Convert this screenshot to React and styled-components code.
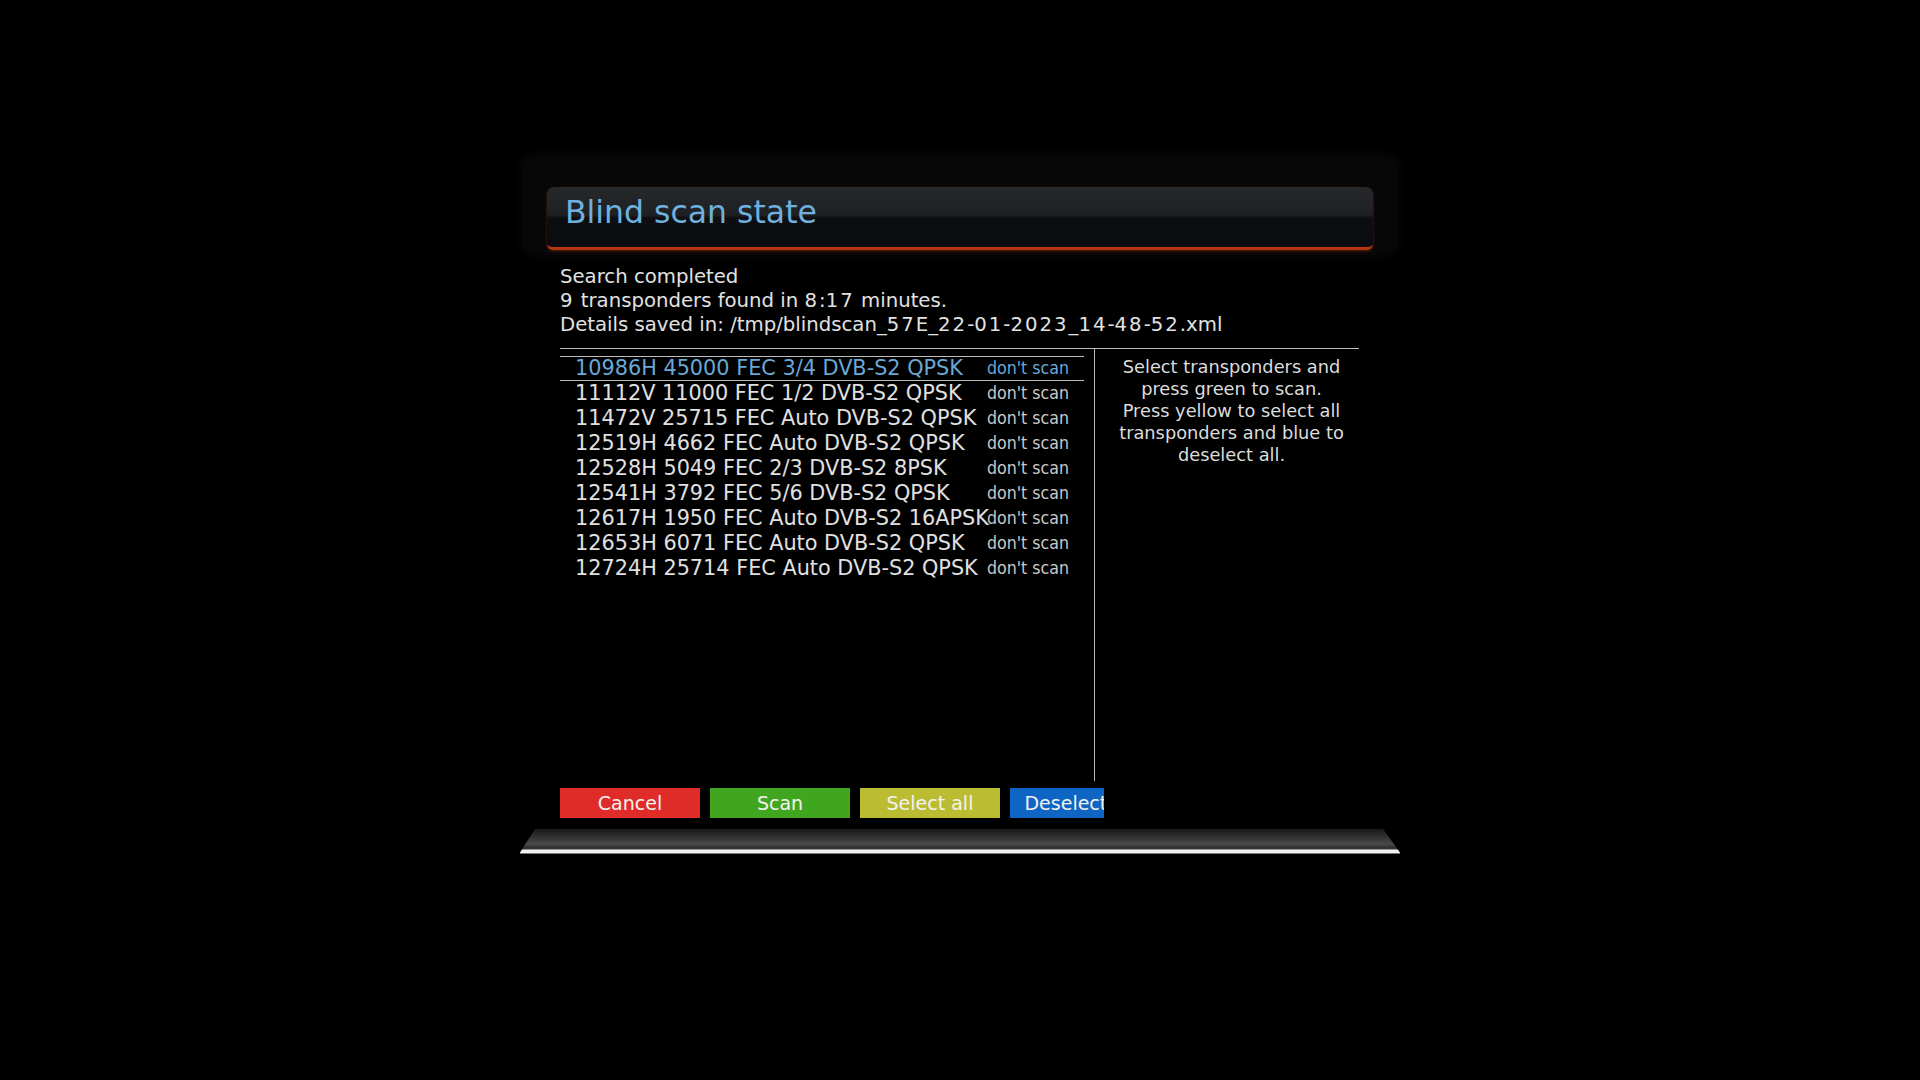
import React from 'react';
import styled, { createGlobalStyle } from 'styled-components';

const GlobalStyle = createGlobalStyle`
  html, body {
    margin: 0;
    padding: 0;
    background: #000;
  }
  body {
    font-family: "DejaVu Sans", Verdana, sans-serif;
  }
`;

const Screen = styled.div`
  width: 1920px;
  height: 1080px;
  box-sizing: border-box;
  padding-top: 155px;
  background: #000;
  overflow: hidden;
`;

const Window = styled.div`
  width: 880px;
  margin: 0 auto;
  display: flex;
  flex-direction: column;
`;

const HeaderFrame = styled.div`
  margin: 0 2px;
  padding: 32px 25px 5px;
  background: #070707;
  border-radius: 14px;
  box-shadow: 0 0 10px 4px #050505;
`;

const TitleBar = styled.div`
  height: 60px;
  box-sizing: content-box;
  padding: 0 0 0 18px;
  border-bottom: 3px solid #b5360f;
  border-radius: 7px 7px 6px 6px;
  background: linear-gradient(
    to bottom,
    #27282b 0,
    #1f2023 28px,
    #0d0e12 31px,
    #0a0b0f 100%
  );
  box-shadow: 0 1px 3px rgba(200, 60, 10, 0.45);
`;

const Title = styled.h1`
  margin: 0;
  padding-top: 7px;
  font-size: 31.5px;
  font-weight: normal;
  color: #6eb0de;
  line-height: 1.164;
`;

const Body = styled.div`
  padding-left: 40px;
  display: flex;
  flex-direction: column;
`;

const Info = styled.div`
  margin-top: 10px;
  font-size: 19.7px;
  line-height: 24px;
  color: #e2e2e2;
  white-space: nowrap;
`;

// the receiver's font sets digits wider than DejaVu does
const Num = styled.span`
  letter-spacing: 2px;
`;

const Separator = styled.div`
  margin-top: 11px;
  width: 799px;
  height: 1px;
  background: #bdbdbd;
`;

const Columns = styled.div`
  display: flex;
  height: 432px;
`;

const ListCol = styled.div`
  width: 534px;
  padding-top: 7px;
  box-sizing: border-box;
`;

const Row = styled.div`
  width: 524px;
  height: 25px;
  box-sizing: border-box;
  display: grid;
  grid-template-columns: 412px 1fr;
  align-items: center;
  padding-left: 15px;
  border-top: 1px solid ${p => (p.$selected ? '#bdbdbd' : 'transparent')};
  border-bottom: 1px solid ${p => (p.$selected ? '#bdbdbd' : 'transparent')};
  color: ${p => (p.$selected ? '#6aa8d6' : '#e0e0e0')};
  white-space: nowrap;
`;

const RowName = styled.span`
  font-size: 20.8px;
  line-height: 23px;
`;

const RowState = styled.span`
  font-family: "DejaVu Sans Condensed", "DejaVu Sans", sans-serif;
  font-stretch: condensed;
  font-size: 17.6px;
  line-height: 23px;
  color: ${p => (p.$selected ? '#6aa8d6' : '#c8c8c8')};
`;

const Divider = styled.div`
  width: 1px;
  background: #bdbdbd;
`;

const Help = styled.div`
  width: 273px;
  padding-top: 7px;
  text-align: center;
  font-size: 17.8px;
  line-height: 22px;
  color: #dcdcdc;
`;

const ButtonRow = styled.div`
  margin-top: 7px;
  width: 544px;
  display: flex;
  gap: 10px;
  overflow: hidden;
`;

const Button = styled.div`
  flex: 0 0 140px;
  height: 30px;
  line-height: 31px;
  text-align: center;
  font-size: 19px;
  color: #f2f2f2;
  white-space: nowrap;
  background: ${p => p.$color};
`;

const BottomBar = styled.div`
  margin-top: 11px;
  height: 26px;
  clip-path: polygon(15px 0, 863px 0, 100% 90%, 100% 100%, 0 100%, 0 90%);
  background: linear-gradient(
    to bottom,
    #1a1a1a 0,
    #2a2a2a 6px,
    #3c3c3c 11px,
    #4a4a4a 15px,
    #2c2c2c 19px,
    #3a3a3a 20px,
    #f2f2f2 21px,
    #f2f2f2 24px,
    #000 25px
  );
`;

const transponders = [
  '10986H 45000 FEC 3/4 DVB-S2 QPSK',
  '11112V 11000 FEC 1/2 DVB-S2 QPSK',
  '11472V 25715 FEC Auto DVB-S2 QPSK',
  '12519H 4662 FEC Auto DVB-S2 QPSK',
  '12528H 5049 FEC 2/3 DVB-S2 8PSK',
  '12541H 3792 FEC 5/6 DVB-S2 QPSK',
  '12617H 1950 FEC Auto DVB-S2 16APSK',
  '12653H 6071 FEC Auto DVB-S2 QPSK',
  '12724H 25714 FEC Auto DVB-S2 QPSK',
];

const buttons = [
  { label: 'Cancel', color: '#e02c28' },
  { label: 'Scan', color: '#40a61f' },
  { label: 'Select all', color: '#bcbc32' },
  { label: 'Deselect all', color: '#0f65c4' },
];

const infoLines = [
  'Search completed',
  '9 transponders found in 8:17 minutes.',
  'Details saved in: /tmp/blindscan_57E_22-01-2023_14-48-52.xml',
];

const withWideDigits = line =>
  line.split(/(\d+)/).map((part, i) =>
    /^\d+$/.test(part) ? <Num key={i}>{part}</Num> : part
  );

const App = () => (
  <Screen>
    <GlobalStyle />
    <Window>
      <HeaderFrame>
        <TitleBar>
          <Title>Blind scan state</Title>
        </TitleBar>
      </HeaderFrame>

      <Body>
        <Info>
          {infoLines.map(line => (
            <div key={line}>{withWideDigits(line)}</div>
          ))}
        </Info>

        <Separator />

        <Columns>
          <ListCol>
            {transponders.map((t, i) => (
              <Row key={t} $selected={i === 0}>
                <RowName>{t}</RowName>
                <RowState $selected={i === 0}>don't scan</RowState>
              </Row>
            ))}
          </ListCol>
          <Divider />
          <Help>
            Select transponders and
            <br />
            press green to scan.
            <br />
            Press yellow to select all
            <br />
            transponders and blue to
            <br />
            deselect all.
          </Help>
        </Columns>

        <ButtonRow>
          {buttons.map(b => (
            <Button key={b.label} $color={b.color}>
              {b.label}
            </Button>
          ))}
        </ButtonRow>
      </Body>

      <BottomBar />
    </Window>
  </Screen>
);

export default App;
